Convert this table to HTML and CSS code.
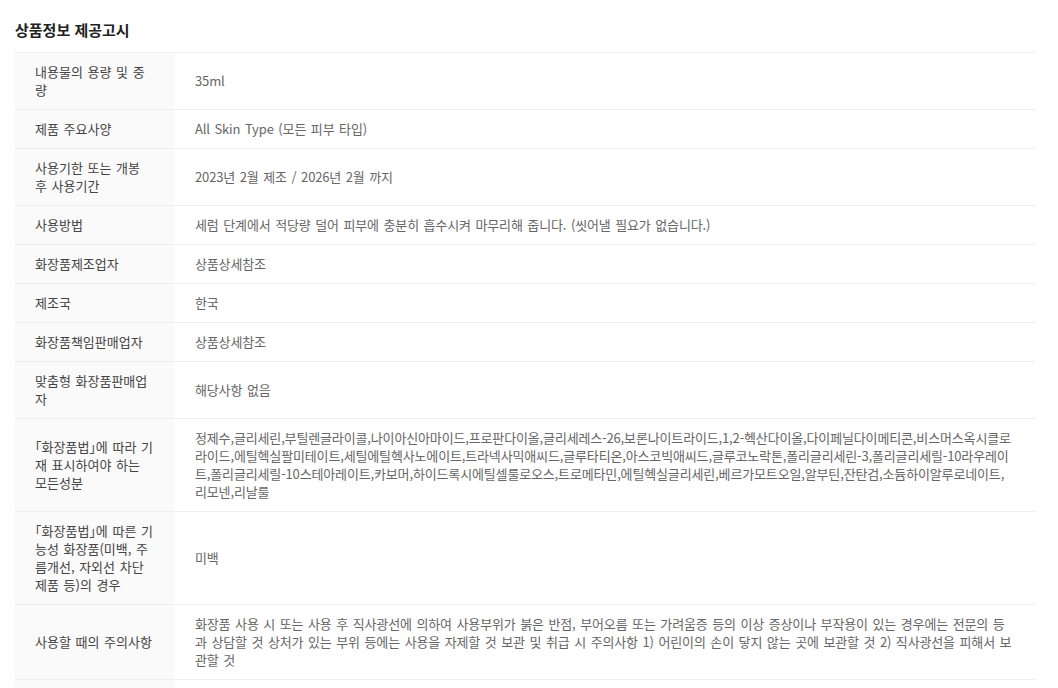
FILE: index.html
```html
<!DOCTYPE html>
<html lang="ko">
<head>
    <meta charset="UTF-8">
    <meta name="viewport" content="width=device-width, initial-scale=1.0">
    <title>상품정보 제공고시</title>
    <link rel="stylesheet" href="styles.css">
</head>
<body>
    <div class="notice">
        <h2 class="notice-title">상품정보 제공고시</h2>
        <table class="notice-table">
            <tr>
                <th>내용물의 용량 및 중량</th>
                <td>35ml</td>
            </tr>
            <tr>
                <th>제품 주요사양</th>
                <td>All Skin Type (모든 피부 타입)</td>
            </tr>
            <tr>
                <th>사용기한 또는 개봉 후 사용기간</th>
                <td>2023년 2월 제조 / 2026년 2월 까지</td>
            </tr>
            <tr>
                <th>사용방법</th>
                <td>세럼 단계에서 적당량 덜어 피부에 충분히 흡수시켜 마무리해 줍니다. (씻어낼 필요가 없습니다.)</td>
            </tr>
            <tr>
                <th>화장품제조업자</th>
                <td>상품상세참조</td>
            </tr>
            <tr>
                <th>제조국</th>
                <td>한국</td>
            </tr>
            <tr>
                <th>화장품책임판매업자</th>
                <td>상품상세참조</td>
            </tr>
            <tr>
                <th>맞춤형 화장품판매업자</th>
                <td>해당사항 없음</td>
            </tr>
            <tr>
                <th>「화장품법」에 따라 기재 표시하여야 하는 모든성분</th>
                <td>정제수,글리세린,부틸렌글라이콜,나이아신아마이드,프로판다이올,글리세레스-26,보론나이트라이드,1,2-헥산다이올,다이페닐다이메티콘,비스머스옥시클로라이드,에틸헥실팔미테이트,세틸에틸헥사노에이트,트라넥사믹애씨드,글루타티온,아스코빅애씨드,글루코노락톤,폴리글리세린-3,폴리글리세릴-10라우레이트,폴리글리세릴-10스테아레이트,카보머,하이드록시에틸셀룰로오스,트로메타민,에틸헥실글리세린,베르가모트오일,알부틴,잔탄검,소듐하이알루로네이트,리모넨,리날룰</td>
            </tr>
            <tr>
                <th>「화장품법」에 따른 기능성 화장품(미백, 주름개선, 자외선 차단제품 등)의 경우</th>
                <td>미백</td>
            </tr>
            <tr>
                <th>사용할 때의 주의사항</th>
                <td>화장품 사용 시 또는 사용 후 직사광선에 의하여 사용부위가 붉은 반점, 부어오름 또는 가려움증 등의 이상 증상이나 부작용이 있는 경우에는 전문의 등과 상담할 것 상처가 있는 부위 등에는 사용을 자제할 것 보관 및 취급 시 주의사항 1) 어린이의 손이 닿지 않는 곳에 보관할 것 2) 직사광선을 피해서 보관할 것</td>
            </tr>
            <tr>
                <th>품질보증기준</th>
                <td>공정거래위원회 고시 소비자분쟁해결기준에 의거 보상해 드립니다.</td>
            </tr>
        </table>
    </div>
</body>
</html>
```

FILE: styles.css
```css
body {
    margin: 0;
    background: #fff;
    font-family: "Noto Sans CJK KR", "Noto Sans", sans-serif;
    color: #333;
}
.notice {
    padding: 19px 15px 0 15px;
}
.notice-title {
    margin: 0 0 11px 0;
    font-size: 15px;
    line-height: 22px;
    font-weight: bold;
    color: #222;
}
.notice-table {
    width: 1020px;
    border-collapse: collapse;
    border-top: 1px solid #eee;
    font-size: 13px;
    line-height: 18px;
    word-spacing: 1px;
}
.notice-table th,
.notice-table td {
    padding: 10px 20px;
    border-bottom: 1px solid #eee;
    text-align: left;
    vertical-align: middle;
}
.notice-table th {
    width: 120px;
    background: #fafafa;
    font-weight: normal;
    color: #444;
    font-feature-settings: "halt"; /* half-width corner brackets */
}
.notice-table td {
    color: #666;
    letter-spacing: -0.15px;
    word-spacing: 1.15px;
}
```
